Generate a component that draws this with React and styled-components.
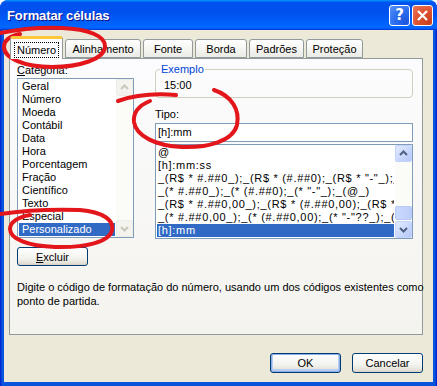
import React from "react";
import styled, { createGlobalStyle } from "styled-components";

const GlobalStyle = createGlobalStyle`
  html, body {
    margin: 0;
    padding: 0;
    background: #ffffff;
  }
  body {
    font-family: "Liberation Sans", Arial, sans-serif;
    font-size: 11px;
    color: #000;
  }
`;

const tabs = [
  { label: "Número", width: 53, active: true },
  { label: "Alinhamento", width: 76 },
  { label: "Fonte", width: 50 },
  { label: "Borda", width: 52 },
  { label: "Padrões", width: 55 },
  { label: "Proteção", width: 57 },
];

const categories = [
  "Geral",
  "Número",
  "Moeda",
  "Contábil",
  "Data",
  "Hora",
  "Porcentagem",
  "Fração",
  "Científico",
  "Texto",
  "Especial",
  "Personalizado",
];

const formats = [
  "@",
  "[h]:mm:ss",
  '_(R$ * #.##0_);_(R$ * (#.##0);_(R$ * "-"_);_(@_)',
  '_(* #.##0_);_(* (#.##0);_(* "-"_);_(@_)',
  '_(R$ * #.##0,00_);_(R$ * (#.##0,00);_(R$ * "-"??_);_(@_)',
  '_(* #.##0,00_);_(* (#.##0,00);_(* "-"??_);_(@_)',
  "[h]:mm",
];

const Arrow = ({ down, color }) => (
  <svg width="15" height="15" viewBox="0 0 15 15">
    <path
      d={down ? "M4 6 L7.5 9.5 L11 6" : "M4 9 L7.5 5.5 L11 9"}
      fill="none"
      stroke={color}
      strokeWidth="2"
    />
  </svg>
);

const ScrollBar = ({ disabled, thumb }) => (
  <Scroll>
    <ScrollButton $disabled={disabled}>
      <Arrow color={disabled ? "#C9C7BA" : "#4D6185"} />
    </ScrollButton>
    <Track>{thumb && <Thumb />}</Track>
    <ScrollButton $disabled={disabled}>
      <Arrow down color={disabled ? "#C9C7BA" : "#4D6185"} />
    </ScrollButton>
  </Scroll>
);

export default function App() {
  return (
    <>
      <GlobalStyle />
      <Window>
        <TitleBar>
          <Title>Formatar células</Title>
          <TitleButton $kind="help">?</TitleButton>
          <TitleButton $kind="close">
            <svg width="13" height="13" viewBox="0 0 13 13">
              <path d="M2 2 L11 11 M11 2 L2 11" stroke="#fff" strokeWidth="2.2" />
            </svg>
          </TitleButton>
        </TitleBar>

        <Body>
          <TabStrip>
            {tabs.map((t) => (
              <Tab key={t.label} $active={t.active} style={{ width: t.width }}>
                {t.active ? <Focus>{t.label}</Focus> : t.label}
              </Tab>
            ))}
          </TabStrip>

          <Panel>
            <Columns>
              <LeftColumn>
                <Label>
                  <u>C</u>ategoria:
                </Label>
                <ListBox $height={160}>
                  <Items $pad={1}>
                    {categories.map((c) => (
                      <Item key={c} $selected={c === "Personalizado"} $indent={3}>
                        {c}
                      </Item>
                    ))}
                  </Items>
                  <ScrollBar disabled />
                </ListBox>
                <Button $width={71} $height={19} $top={9}>
                  <u>E</u>xcluir
                </Button>
              </LeftColumn>

              <RightColumn>
                <Group>
                  <Legend>Exemplo</Legend>
                  <Sample>15:00</Sample>
                </Group>
                <TypeLabel>Tipo:</TypeLabel>
                <TypeInput>[h]:mm</TypeInput>
                <ListBox $height={95} $top={2}>
                  <Items $pad={1}>
                    {formats.map((f) => (
                      <Item
                        key={f}
                        $selected={f === "[h]:mm"}
                        $indent={1}
                        $spacing={0.7}
                      >
                        {f}
                      </Item>
                    ))}
                  </Items>
                  <ScrollBar thumb />
                </ListBox>
              </RightColumn>
            </Columns>

            <Description>
              Digite o código de formatação do número, usando um dos códigos existentes como
              <br />
              ponto de partida.
            </Description>
          </Panel>

          <Actions>
            <Button $width={71} $height={20} $default>
              OK
            </Button>
            <Button $width={71} $height={20}>
              Cancelar
            </Button>
          </Actions>
        </Body>

        <Marks width="437" height="386" viewBox="0 0 437 386">
          <g fill="none" stroke="#E3161B" strokeWidth="4" strokeLinecap="round">
            <path d="M0 33 C 20 29, 40 27, 62 28 C 88 29, 106 36, 105 47 C 104 59, 80 67, 52 67 C 24 67, 4 58, 4 47 C 4 40, 10 36, 20 34" />
            <path d="M118 101 C 132 96, 152 93, 176 95" />
            <path d="M214 90 C 232 96, 240 110, 237 125 C 233 141, 208 148, 182 147 C 156 146, 136 136, 134 122 C 133 112, 140 105, 150 101" />
            <path d="M0 214 C 20 211, 50 209, 80 210 C 103 212, 114 220, 112 230 C 110 242, 85 248, 55 247 C 28 246, 10 239, 10 229 C 10 222, 18 217, 30 215" />
          </g>
        </Marks>
      </Window>
    </>
  );
}

const Window = styled.div`
  position: relative;
  width: 437px;
  height: 386px;
  box-sizing: border-box;
  display: flex;
  flex-direction: column;
  background: linear-gradient(90deg, #0019CF 0, #0855DD 2px, #0855DD 435px, #0019CF 437px);
  border-radius: 8px 8px 0 0;
  overflow: hidden;
`;

const TitleBar = styled.div`
  height: 30px;
  flex: none;
  display: flex;
  align-items: center;
  gap: 2px;
  padding: 0 4px 0 7px;
  box-sizing: border-box;
  background: linear-gradient(
    180deg,
    #0997ff,
    #0053ee 8%,
    #0050ee 40%,
    #0066ff 88%,
    #0066ff 93%,
    #005bff 95%,
    #003dd7 96%,
    #003dd7
  );
`;

const Title = styled.div`
  flex: 1;
  color: #fff;
  font-family: "Liberation Sans", Arial, sans-serif;
  font-weight: bold;
  font-size: 13px;
  letter-spacing: -0.1px;
  text-shadow: 1px 1px #0f1089;
`;

const TitleButton = styled.div`
  width: 21px;
  height: 21px;
  box-sizing: border-box;
  border: 1px solid #fff;
  border-radius: 3px;
  display: flex;
  align-items: center;
  justify-content: center;
  color: #fff;
  font-family: "DejaVu Sans", sans-serif;
  font-weight: bold;
  font-size: 15px;
  background: ${(p) =>
    p.$kind === "close"
      ? "radial-gradient(circle at 85% 85%, #c8401f 0%, #e05533 55%, #ec7a5c 100%)"
      : "radial-gradient(circle at 85% 85%, #1c56df 0%, #2f70ee 55%, #5b95f7 100%)"};
`;

const Body = styled.div`
  flex: 1;
  margin: 0 4px 4px;
  background: #ece9d8;
  display: flex;
  flex-direction: column;
  padding-top: 6px;
`;

const TabStrip = styled.div`
  display: flex;
  align-items: flex-end;
  gap: 2px;
  height: 23px;
  margin: 0 0 -1px 6px;
`;

const Tab = styled.div`
  position: relative;
  z-index: ${(p) => (p.$active ? 1 : 0)};
  box-sizing: border-box;
  height: ${(p) => (p.$active ? "23px" : "19px")};
  margin-bottom: ${(p) => (p.$active ? "0" : "1px")};
  border: 1px solid #919b9c;
  border-bottom: ${(p) => (p.$active ? "none" : "1px solid #919b9c")};
  border-top: ${(p) => (p.$active ? "3px solid #ffc83c" : "1px solid #919b9c")};
  border-radius: 3px 3px 0 0;
  background: ${(p) =>
    p.$active ? "#fcfcfe" : "linear-gradient(180deg, #ffffff, #f3f3ef 60%, #ecebe6)"};
  display: flex;
  align-items: center;
  justify-content: center;
  padding-top: 1px;
  white-space: nowrap;
`;

const Focus = styled.span`
  outline: 1px dotted #000;
  padding: 1px 2px;
`;

const Panel = styled.div`
  margin-left: 5px;
  width: 414px;
  height: 277px;
  box-sizing: border-box;
  border: 1px solid #919b9c;
  background: linear-gradient(180deg, #fcfcfe, #f4f3ee);
  padding: 5px 7px 0;
`;

const Columns = styled.div`
  display: grid;
  grid-template-columns: 117px 258px;
  column-gap: 21px;
`;

const LeftColumn = styled.div`
  display: flex;
  flex-direction: column;
  align-items: flex-start;
`;

const RightColumn = styled.div`
  display: flex;
  flex-direction: column;
`;

const Label = styled.div`
  line-height: 13px;
  height: 13px;
`;

const ListBox = styled.div`
  margin-top: ${(p) => p.$top ?? 1}px;
  width: 100%;
  height: ${(p) => p.$height}px;
  box-sizing: border-box;
  border: 1px solid #7f9db9;
  background: #fff;
  display: flex;
`;

const Items = styled.div`
  flex: 1;
  min-width: 0;
  padding: ${(p) => p.$pad}px;
  padding-top: 1px;
  overflow: hidden;
`;

const Item = styled.div`
  height: 13px;
  line-height: 13px;
  padding-left: ${(p) => p.$indent}px;
  letter-spacing: ${(p) => p.$spacing ?? 0}px;
  white-space: nowrap;
  overflow: hidden;
  background: ${(p) => (p.$selected ? "#316ac5" : "transparent")};
  color: ${(p) => (p.$selected ? "#fff" : "#000")};
`;

const Scroll = styled.div`
  width: 17px;
  flex: none;
  display: flex;
  flex-direction: column;
  background: #fbfbf8;
`;

const ScrollButton = styled.div`
  width: 17px;
  height: 17px;
  box-sizing: border-box;
  border: 1px solid ${(p) => (p.$disabled ? "#eeede5" : "#c3d3fd")};
  border-radius: 2px;
  background: ${(p) =>
    p.$disabled ? "#f4f3ee" : "linear-gradient(135deg, #e3ebfe, #c6d6fb 60%, #b4c8f6)"};
  display: flex;
  align-items: center;
  justify-content: center;
`;

const Track = styled.div`
  flex: 1;
  display: flex;
  flex-direction: column;
  justify-content: flex-end;
`;

const Thumb = styled.div`
  height: 12px;
  margin: 0 0 1px;
  border: 1px solid #b5c8f7;
  border-radius: 2px;
  background: linear-gradient(90deg, #cad8fc, #bccff9);
`;

const Button = styled.div`
  margin-top: ${(p) => p.$top ?? 0}px;
  width: ${(p) => p.$width}px;
  height: ${(p) => p.$height}px;
  box-sizing: border-box;
  border: 1px solid #003c74;
  border-radius: 3px;
  background: linear-gradient(180deg, #ffffff, #f3f3ef 60%, #e3e0d6 90%, #d6d0c5);
  box-shadow: ${(p) =>
    p.$default ? "inset 0 0 0 1px #8caee8, inset 0 -1px 0 2px #b9cdf3" : "none"};
  display: flex;
  align-items: center;
  justify-content: center;
`;

const Group = styled.fieldset`
  margin: -1px 0 0;
  height: 35px;
  box-sizing: border-box;
  border: 1px solid #d0d0bf;
  border-radius: 4px;
  padding: 0 8px;
`;

const Legend = styled.legend`
  color: #0046d5;
  padding: 0 1px;
  margin-left: -4px;
  line-height: 13px;
`;

const Sample = styled.div`
  line-height: 13px;
  margin-top: 3px;
`;

const TypeLabel = styled.div`
  margin-top: 10px;
  line-height: 13px;
`;

const TypeInput = styled.div`
  margin-top: 2px;
  height: 19px;
  box-sizing: border-box;
  border: 1px solid #7f9db9;
  background: #fff;
  padding: 0 2px;
  line-height: 17px;
`;

const Description = styled.div`
  margin-top: 14px;
  line-height: 14px;
  white-space: nowrap;
`;

const Actions = styled.div`
  display: flex;
  justify-content: flex-end;
  gap: 11px;
  margin-top: 18px;
  padding-right: 10px;
`;

const Marks = styled.svg`
  position: absolute;
  top: 0;
  left: 0;
  pointer-events: none;
`;
